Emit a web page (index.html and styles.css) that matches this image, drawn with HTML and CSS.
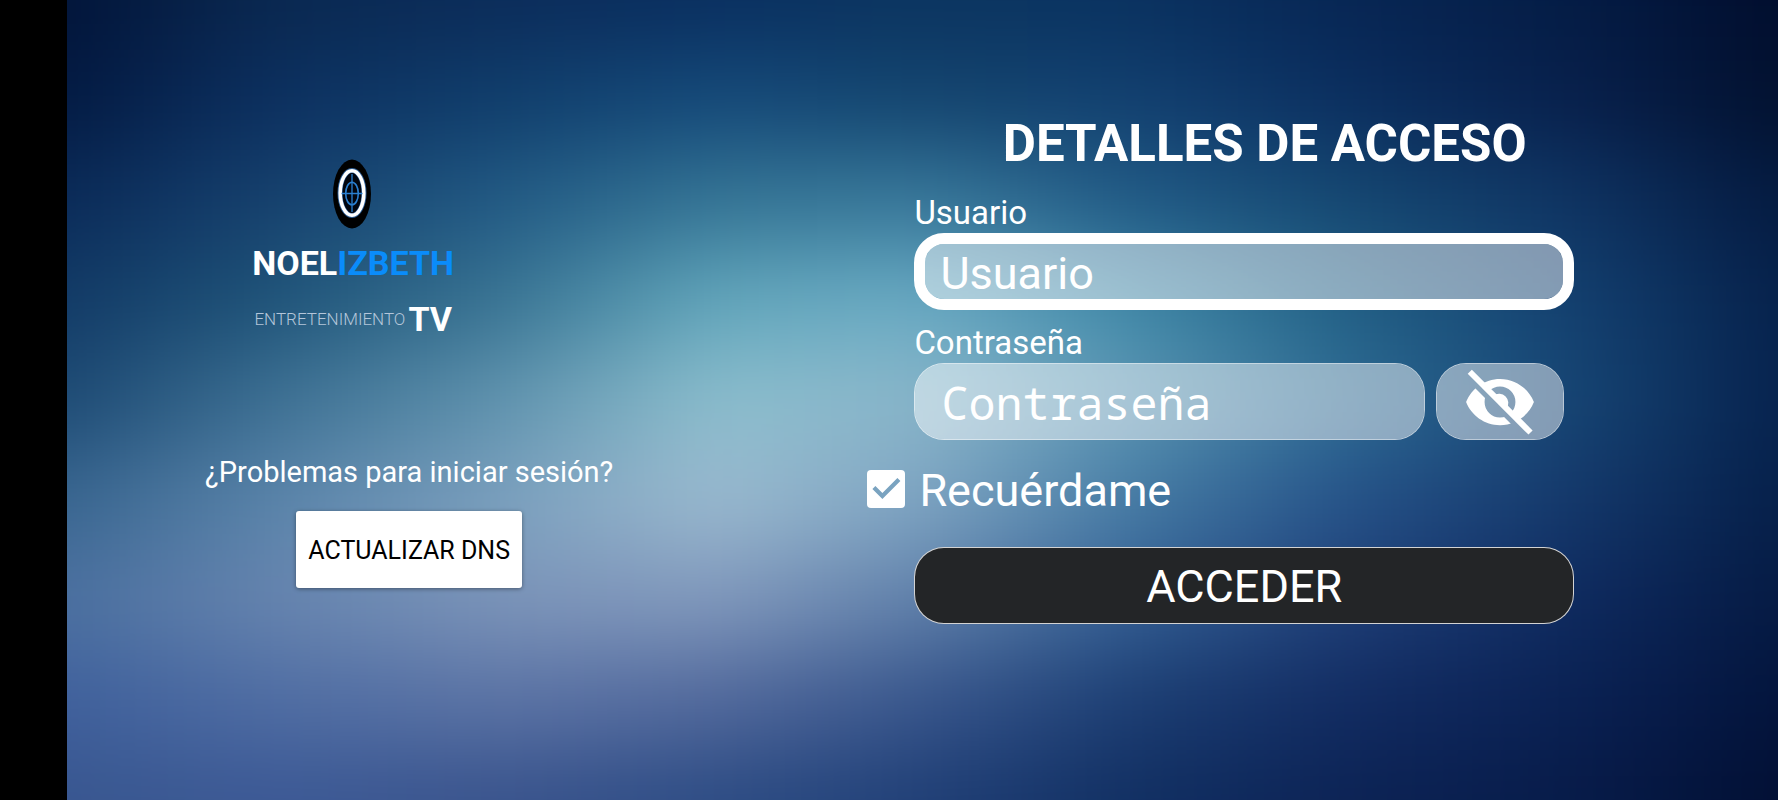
FILE: index.html
```html
<!DOCTYPE html>
<html lang="es">
<head>
<meta charset="utf-8">
<meta name="viewport" content="width=device-width, initial-scale=1">
<title>Noelizbeth TV</title>
<link rel="stylesheet" href="styles.css">
</head>
<body>
<div class="screen">
  <div class="backdrop" aria-hidden="true">
    <div class="band band-1"></div>
    <div class="band band-2"></div>
    <div class="band band-3"></div>
    <div class="band band-4"></div>
    <div class="band band-5"></div>
    <div class="band band-6"></div>
    <div class="band band-7"></div>
    <div class="band band-8"></div>
    <div class="band band-9"></div>
  </div>
  <aside class="side">
    <div class="logo">
      <svg class="logo-mark" width="40" height="70" viewBox="0 0 40 70" aria-hidden="true">
        <ellipse cx="19" cy="35" rx="19" ry="34.5" fill="#000"/>
        <ellipse cx="19" cy="34" rx="12" ry="22.500" fill="#02060f" stroke="#2e5f96" stroke-width="5"/>
        <ellipse cx="19" cy="34" rx="11.800" ry="22.300" fill="none" stroke="#fff" stroke-width="3.600"/>
        <ellipse cx="19" cy="34.500" rx="6.300" ry="11.300" fill="none" stroke="#2a7fd0" stroke-width="1.600"/>
        <path d="M8.500 34.500h21M19 15v38" stroke="#2a7fd0" stroke-width="1.300"/>
      </svg>
      <div class="logo-name"><span>NOEL</span><span class="logo-accent">IZBETH</span></div>
      <div class="logo-tag"><span class="logo-small">ENTRETENIMIENTO</span><span class="logo-tv">TV</span></div>
    </div>
    <p class="help">¿Problemas para iniciar sesión?</p>
    <button class="dns" type="button">ACTUALIZAR DNS</button>
  </aside>
  <main class="access">
    <h1 class="title">DETALLES DE ACCESO</h1>
    <form class="form">
      <div class="field">
        <label class="label" for="user">Usuario</label>
        <input class="input input-focus" id="user" type="text" placeholder="Usuario">
      </div>
      <div class="field">
        <label class="label" for="pass">Contraseña</label>
        <div class="pass-row">
          <input class="input input-mono" id="pass" type="password" placeholder="Contraseña">
          <button class="eye" type="button" aria-label="Mostrar contraseña">
            <svg width="74" height="74" viewBox="0 0 24 24" aria-hidden="true">
              <mask id="cut">
                <rect width="24" height="24" fill="#fff"/>
                <path d="M1 3.200L21 23.200" stroke="#000" stroke-width="1.900"/>
              </mask>
              <g mask="url(#cut)" fill="#fff">
                <path fill-rule="evenodd" d="M12 4.500C7 4.500 2.730 7.610 1 12c1.730 4.390 6 7.500 11 7.500s9.270-3.110 11-7.500C21.270 7.610 17 4.500 12 4.500zM12 7a5 5 0 0 1 0 10a5 5 0 0 1 0-10z"/>
                <path d="M9.900 9.900A3 3 0 0 1 14.100 14.100z"/>
              </g>
              <path d="M2.200 2.200L21.900 21.900" stroke="#fff" stroke-width="1.900"/>
            </svg>
          </button>
        </div>
      </div>
      <label class="remember"><input class="check" type="checkbox" checked><span>Recuérdame</span></label>
      <button class="submit" type="submit">ACCEDER</button>
    </form>
  </main>
</div>
</body>
</html>
```
FILE: styles.css
```css
* { box-sizing: border-box; }

body {
  margin: 0;
  background: #000;
  color: #fff;
  font-family: Roboto, "Liberation Sans", sans-serif;
}

.screen {
  position: relative;
  display: grid;
  grid-template-columns: 2fr 3fr;
  min-height: 100vh;
  margin-left: 67px;
  overflow: hidden;
  background: #0a2450;
}

/* Soft colour field: nine horizontal bands blurred into each other */
.backdrop {
  position: absolute;
  inset: -100px;
  display: grid;
  grid-template-rows: 150px repeat(7, 1fr) 150px;
  filter: blur(40px);
}
.band-1 { background: linear-gradient(90deg, #021439 5%, #0a2850 16%, #0b2c5a 28%, #0a2f60 39%, #0b3560 50%, #0a3260 61%, #072654 72%, #041c45 84%, #010d2d 95%); }
.band-2 { background: linear-gradient(90deg, #031a42 5%, #0c3060 16%, #103e6c 28%, #154a7a 39%, #14456f 50%, #124070 61%, #0b2f60 72%, #08204c 84%, #02112f 95%); }
.band-3 { background: linear-gradient(90deg, #0a2a58 5%, #16416e 16%, #225a84 28%, #357595 39%, #38789a 50%, #215a85 61%, #154872 72%, #0f3463 84%, #041a40 95%); }
.band-4 { background: linear-gradient(90deg, #123a66 5%, #1f5479 16%, #397493 28%, #62a6bb 39%, #69aac3 50%, #4089a8 61%, #226085 72%, #134070 84%, #06214b 95%); }
.band-5 { background: linear-gradient(90deg, #1d4a74 5%, #3d7093 16%, #6093ae 28%, #8cbecd 39%, #8ab6ca 50%, #5a94b2 61%, #2e6c94 72%, #164574 84%, #06224e 95%); }
.band-6 { background: linear-gradient(90deg, #38658f 5%, #5a84aa 16%, #7ba0be 28%, #9bbacf 39%, #7ea4c2 50%, #457ba4 61%, #265389 72%, #14386b 84%, #051f49 95%); }
.band-7 { background: linear-gradient(90deg, #4b70a0 5%, #6684af 16%, #7c94b9 28%, #8198bc 39%, #6080aa 50%, #335f94 61%, #1f3f78 72%, #0e2a5f 84%, #051a43 95%); }
.band-8 { background: linear-gradient(90deg, #3f609c 5%, #4f6da3 16%, #5b73a5 28%, #52699c 39%, #38568c 50%, #1c3e73 61%, #122c62 72%, #0a2153 84%, #03143c 95%); }
.band-9 { background: linear-gradient(90deg, #38568f 5%, #3c5995 16%, #39538c 28%, #2d4c84 39%, #203f76 50%, #112f62 61%, #0c2355 72%, #071b49 84%, #020f33 95%); }

.side, .access {
  position: relative;
  display: flex;
  flex-direction: column;
}

.side {
  align-items: center;
  padding-top: 159px;
}
.logo {
  display: flex;
  flex-direction: column;
  align-items: center;
  margin-right: 112px;
  font-weight: 700;
}
.logo-name {
  margin-top: 12px;
  font-size: 34px;
  line-height: 44px;
}
.logo-accent { color: #0a8cfa; }
.logo-tag {
  display: flex;
  align-items: center;
  gap: 3px;
  margin-top: 12px;
  font-size: 34px;
  line-height: 44px;
}
.logo-small {
  font-size: 17px;
  font-weight: 300;
  color: #b4c6da;
}
.help {
  margin: 113px 0 21px;
  font-size: 29px;
  line-height: 36px;
}
.dns {
  min-height: 77px;
  padding: 2px 12px 0;
  border: 0;
  border-radius: 3px;
  background: #fff;
  box-shadow: 0 1px 4px rgba(0, 0, 0, .4);
  color: #000;
  font: 400 25px Roboto, sans-serif;
}

.access { padding-top: 114px; }
.title {
  margin: 0 0 20px;
  font-size: 51px;
  font-weight: 700;
  line-height: 60px;
  text-align: center;
}
.form {
  display: flex;
  flex-direction: column;
  margin: 0 204px 0 116px;
}
.field {
  display: flex;
  flex-direction: column;
  gap: 1px;
  margin: 0 0 14px 47px;
}
.label {
  font-size: 33px;
  line-height: 38px;
}
.input {
  width: 100%;
  min-width: 0;
  height: 77px;
  padding: 2px 26px 0;
  border: 1px solid rgba(255, 255, 255, .7);
  border-radius: 30px;
  outline: 0;
  background: rgba(255, 255, 255, .48);
  background-clip: padding-box;
  color: #fff;
  font: 45px Roboto, sans-serif;
}
.input::placeholder { color: #fff; opacity: 1; }
.input-focus {
  padding: 4px 15px 0;
  border: 11px solid #fff;
}
.input-mono { font-family: "Noto Sans Mono", "DejaVu Sans Mono", monospace; }
.pass-row {
  display: flex;
  gap: 11px;
  margin-right: 10px;
}
.eye {
  display: flex;
  flex: 0 0 128px;
  align-items: center;
  justify-content: center;
  padding: 0;
  border: 1px solid rgba(255, 255, 255, .7);
  border-radius: 30px;
  background: rgba(255, 255, 255, .47);
  background-clip: padding-box;
}
.remember {
  display: flex;
  align-items: center;
  gap: 14px;
  margin-top: 10px;
  font-size: 45px;
  line-height: 54px;
}
.check {
  appearance: none;
  width: 38px;
  height: 38px;
  margin: 0 0 4px;
  border-radius: 4px;
  background: #fff;
}
.check:checked::before {
  content: "";
  display: block;
  width: 38px;
  height: 38px;
  background: #7aa3c0;
  clip-path: polygon(5px 19px, 8px 16px, 15px 23px, 30px 8px, 33px 11px, 15px 29px);
}
.submit {
  min-height: 77px;
  margin: 29px 0 0 47px;
  padding: 2px 0 0;
  border: 1px solid rgba(255, 255, 255, .8);
  border-radius: 30px;
  background: #232527;
  color: #fff;
  font: 45px Roboto, sans-serif;
}
```
